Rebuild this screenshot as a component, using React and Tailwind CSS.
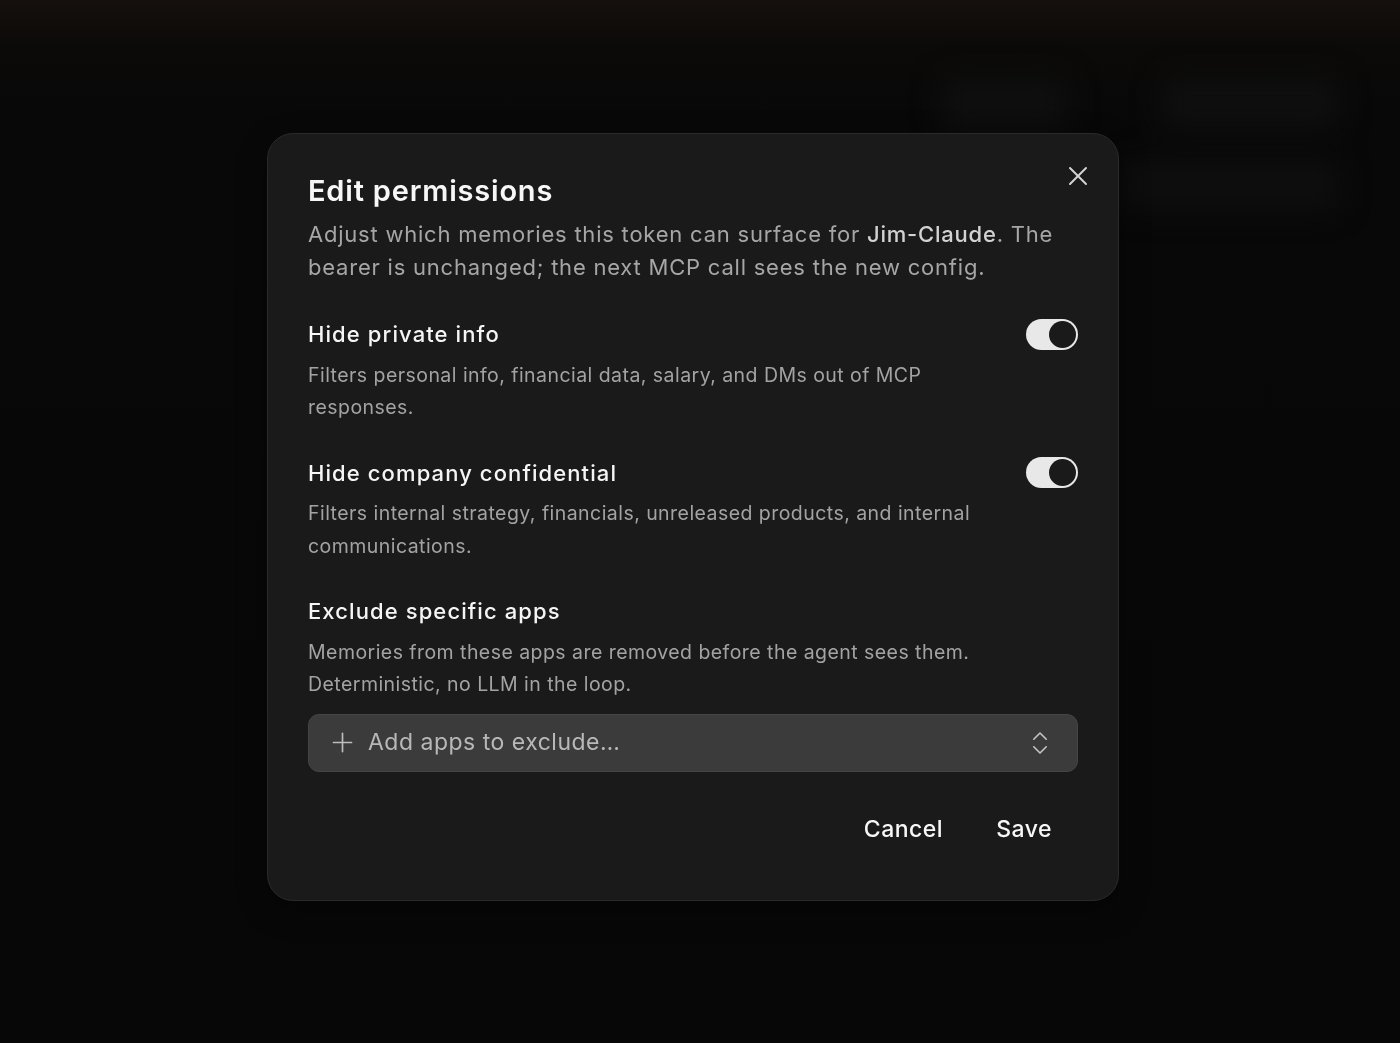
import React, { useState } from "react";
import { X, Plus, ChevronsUpDown } from "lucide-react";

function Toggle({ on, onChange }) {
  return (
    <button
      type="button"
      onClick={onChange}
      className={`flex h-[31px] w-[52px] shrink-0 items-center rounded-full p-[2px] ${on ? "justify-end bg-[#e8e8e8]" : "justify-start bg-[#3a3a3a]"}`}
    >
      <span className="block h-[27px] w-[27px] rounded-full bg-[#1a1a1a]" />
    </button>
  );
}

function Section({ title, desc, toggle, on, onChange, children }) {
  return (
    <div className="flex flex-col">
      <div className="flex items-center justify-between">
        <h3 className="text-[22px] font-medium leading-[32px] tracking-[1.1px] text-[#f5f5f5]">{title}</h3>
        {toggle && <Toggle on={on} onChange={onChange} />}
      </div>
      <p className="mt-[8.5px] text-[19.5px] leading-[32.5px] tracking-[0.45px] text-[#a3a3a3]">{desc}</p>
      {children}
    </div>
  );
}

export default function App() {
  const [a, setA] = useState(true);
  const [b, setB] = useState(true);
  return (
    <div
      className="relative min-h-screen overflow-hidden bg-[#080808] bg-[linear-gradient(180deg,#15100d_0px,#0c0a09_45px,#080808_110px,#070707_100%)]"
      style={{ fontFamily: "Inter, 'Noto Sans', sans-serif" }}
    >
      {/* blurred page content behind the overlay */}
      <div className="flex flex-col items-end gap-[30px] pr-[60px] pt-[78px] blur-[14px]">
        <div className="flex gap-[90px]">
          <div className="h-[52px] w-[130px] rounded-[14px] bg-[#0f0f0f]" />
          <div className="h-[50px] w-[180px] rounded-[14px] bg-[#0f0f0f]" />
        </div>
        <div className="h-[50px] w-[220px] rounded-[14px] bg-[#0e0e0e]" />
      </div>

      <div className="fixed inset-0 flex items-start justify-center pr-[14px] pt-[133px]">
        <div className="relative flex w-[852px] flex-col rounded-[26px] border border-[#2a2a2a] bg-[#1a1a1a] px-[40px] pb-[46px] pt-[39px] shadow-[0_10px_30px_rgba(0,0,0,0.35)]">
          <button type="button" className="absolute right-[24px] top-[26px] text-[#d4d4d4]">
            <X size={32} strokeWidth={1.5} />
          </button>

          <h2 className="text-[29px] font-semibold leading-[36px] tracking-[0.8px] text-[#f7f7f7]">Edit permissions</h2>
          <p className="mt-[9px] w-[760px] text-[22px] leading-[33px] tracking-[0.78px] text-[#a6a6a6]">
            Adjust which memories this token can surface for{" "}
            <span className="font-medium text-[#d2d2d2]">Jim-Claude</span>. The bearer is unchanged; the next MCP call sees the new config.
          </p>

          <div className="mt-[34px] flex flex-col gap-[33px]">
            <Section
              title="Hide private info"
              desc={<>Filters personal info, financial data, salary, and DMs out of MCP<br />responses.</>}
              toggle
              on={a}
              onChange={() => setA(!a)}
            />
            <Section
              title="Hide company confidential"
              desc={<>Filters internal strategy, financials, unreleased products, and internal<br />communications.</>}
              toggle
              on={b}
              onChange={() => setB(!b)}
            />
            <Section
              title="Exclude specific apps"
              desc={<>Memories from these apps are removed before the agent sees them.<br />Deterministic, no LLM in the loop.</>}
            >
              <button
                type="button"
                className="mt-[13px] flex h-[58px] w-full items-center rounded-[11px] border border-[#454545] bg-[#3b3b3b] pl-[18px] pr-[22px] text-left"
              >
                <Plus size={31} strokeWidth={1.3} className="text-[#bdbdbd]" />
                <span className="ml-[10px] flex-1 text-[23px] tracking-[0.5px] text-[#b8b8b8]">Add apps to exclude…</span>
                <ChevronsUpDown size={30} strokeWidth={1.3} className="text-[#c4c4c4]" />
              </button>
            </Section>
          </div>

          <div className="mt-[34px] flex items-center justify-end gap-[3px]">
            <button type="button" className="h-[48px] rounded-[10px] px-[24px] text-[23px] font-medium tracking-[0.5px] text-[#f7f7f7]">
              Cancel
            </button>
            <button type="button" className="h-[48px] rounded-[10px] px-[26px] text-[23px] font-medium tracking-[0.5px] text-[#f7f7f7]">
              Save
            </button>
          </div>
        </div>
      </div>
    </div>
  );
}
